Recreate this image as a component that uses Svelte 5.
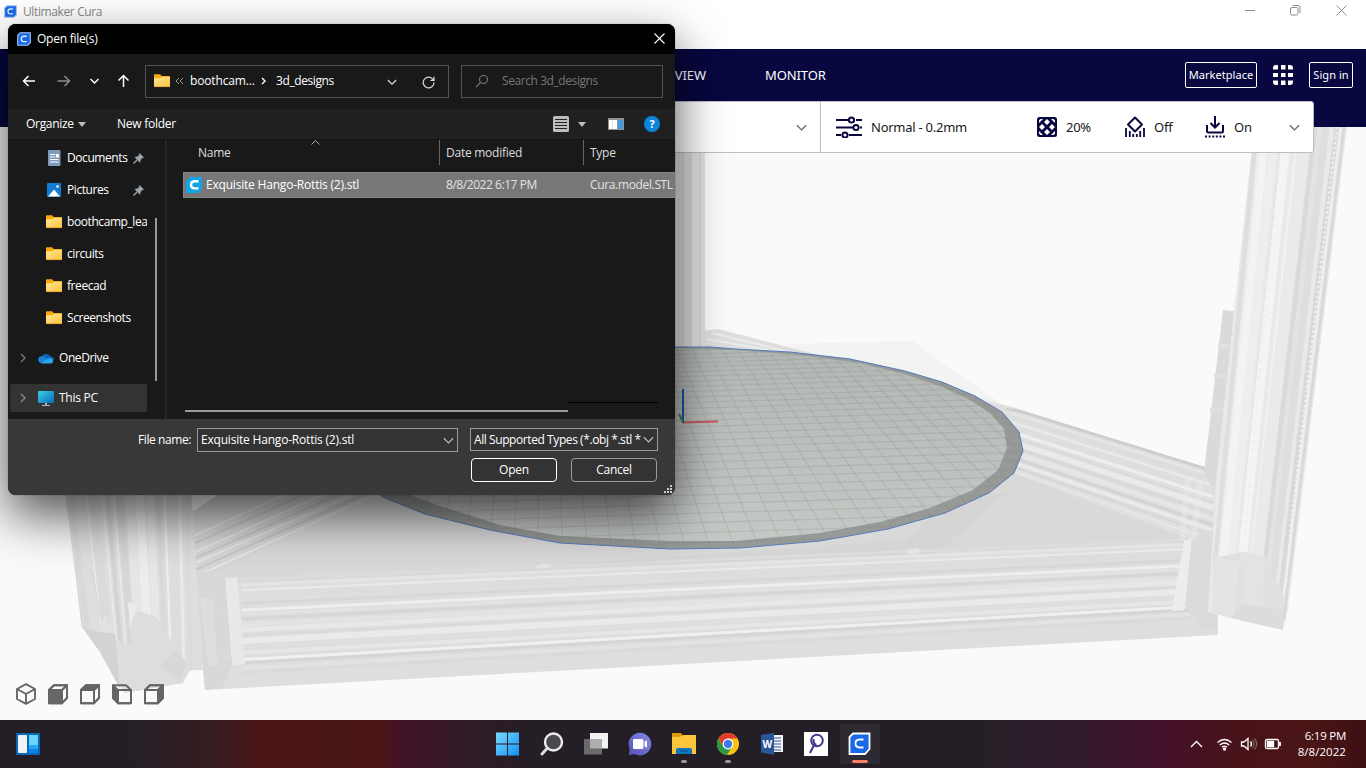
<script>
  const sidebar = [
    { name: 'Documents', icon: 'doc', pin: true },
    { name: 'Pictures', icon: 'pic', pin: true },
    { name: 'boothcamp_lea', icon: 'folder' },
    { name: 'circuits', icon: 'folder' },
    { name: 'freecad', icon: 'folder' },
    { name: 'Screenshots', icon: 'folder' }
  ];

  // Vertices of the round build plate: outer rim and printable area
  const rim = '675,347 711,347 735,349 790,352 850,359 905,371 942,382 975,396 1002,412 1019,432 1023,451 1014,473 989,493 945,513 888,529 820,541 740,548 670,549 560,543 490,530 425,514 383,497 330,450 400,380 560,350';
  const bed = '675,348 735,350 800,355 860,363 905,374 945,388 970,400 990,413 1004,429 1007,448 998,470 973,490 930,508 880,522 820,533 735,541 670,541 560,536 500,525 440,506 383,485 360,440 420,380 560,352';

  // Perspective grid: rows grow towards the viewer, columns fan out
  const rows = Array.from({ length: 34 }, (_, i) => 351 + 118 * (Math.exp(0.0334 * i) - 1));
  const cols = Array.from({ length: 50 }, (_, i) => {
    const k = i - 22;
    return { top: 676 + k * 15, bottom: 760 + k * 24.7 };
  });

  // Stripes across an extruded beam: [offset 0..1, thickness, colour]
  const frontStripes = [
    [0.03, 3, '#dcdcdc'], [0.08, 3, '#e4e4e4'], [0.13, 2, '#eaeaea'], [0.18, 5, '#dcdddc'],
    [0.25, 3, '#d6d7d6'], [0.31, 3, '#eeeeee'], [0.35, 3, '#e2e2e2'], [0.39, 3, '#d5d6d5'],
    [0.44, 4, '#e3e3e3'], [0.49, 5, '#e8e8e8'], [0.54, 2, '#dadada'], [0.59, 6, '#eaeaea'],
    [0.65, 3, '#dfdfdf'], [0.7, 4, '#e6e6e6'], [0.76, 3, '#eff0ef'], [0.79, 3, '#d4d5d4'],
    [0.84, 3, '#e3e3e3'], [0.88, 3, '#dadada']
  ];
  const sideStripes = [
    [0.02, 3, '#d3d3d3'], [0.08, 2, '#e6e6e6'], [0.14, 4, '#dcdedc'], [0.22, 2, '#eaebea'],
    [0.3, 4, '#dcdfdc'], [0.37, 3, '#edefec'], [0.45, 2, '#d8dad8'], [0.52, 5, '#eaebe9'],
    [0.6, 3, '#d7d8d7'], [0.68, 4, '#e6e6e6'], [0.76, 3, '#d2d4d2'], [0.83, 3, '#eaece9'],
    [0.9, 2, '#d6d6d6'], [0.97, 1, '#ebebeb']
  ];
  const pillarStripes = [
    [0.02, 5, '#dedede'], [0.07, 4, '#ececec'], [0.12, 8, '#f2f3f2'], [0.22, 8, '#eeeeee'],
    [0.31, 3, '#e4e5e4'], [0.36, 9, '#f4f4f4'], [0.44, 3, '#e8e9e8'], [0.48, 3, '#f2f2f2'],
    [0.56, 13, '#eaeaea'], [0.66, 5, '#d9dad9'], [0.72, 5, '#e3e4e2'], [0.78, 7, '#dcdfdb'],
    [0.85, 3, '#e9eae8'], [0.9, 5, '#d9dbd9'], [0.94, 2, '#f0f0f0'], [0.98, 3, '#d9d9d9']
  ];
  const leftStripes = [
    [0.03, 6, '#d8d9d8'], [0.11, 5, '#dddedd'], [0.16, 1.5, '#e9e9e9'], [0.21, 9, '#dadbda'],
    [0.29, 2, '#e8e8e8'], [0.33, 4, '#d2d4d2'], [0.38, 1.5, '#ebecea'], [0.43, 7, '#d6d8d6'],
    [0.51, 9, '#e5e6e5'], [0.59, 9, '#eceeec'], [0.67, 8, '#e6e8e6'], [0.74, 4, '#d8d9d8'],
    [0.79, 2, '#eff0ef'], [0.85, 6, '#dcdddc'], [0.91, 3, '#e9ebe8'], [0.97, 4, '#dadbda']
  ];
  const mix = (a, b, t) => a + (b - a) * t;
</script>

{#snippet folder()}
  <svg class="i16" viewBox="0 0 16 16"><path d="M0 2.2Q0 1.3.9 1.3H6l1.700 1.800H15.200q.8 0 .8.8V8H0z" fill="#f5ab0c" /><path d="M0 5.200h6.400L8 3.700h8v9.400q0 .9-.9.9H.9Q0 14 0 13.100z" fill="url(#fold)" /><path d="M.2 13.600h15.600" stroke="#e5a11c" stroke-width=".8" /></svg>
{/snippet}

{#snippet cura(size)}
  <svg width={size} height={size} viewBox="0 0 14 14"><path d="M3.300.700H13.300V10.700L10.700 13.300H.700V3.300z" fill="#1769e8" stroke="#a9c5f2" stroke-width="1.100" /><path d="M9.800 4.300H6.700Q4.300 4.400 4.300 7T6.700 9.600H9.800" fill="none" stroke="#dce9ff" stroke-width="1.400" /></svg>
{/snippet}

{#snippet down(w, color)}
  <svg width={w} height={w} viewBox="0 0 10 10"><path d="M.8 3l4.200 4.200L9.200 3" fill="none" stroke={color} stroke-width="1.100" /></svg>
{/snippet}

<div class="screen">
  <svg class="defs" width="0" height="0">
    <defs>
      <linearGradient id="fold" x1="0" y1="0" x2="1" y2="1"><stop offset="0" stop-color="#ffe59a" /><stop offset="1" stop-color="#fbc53d" /></linearGradient>
      <linearGradient id="bedfill" x1="0" y1="0" x2="0" y2="1"><stop offset="0" stop-color="#b3b7b4" /><stop offset="1" stop-color="#c5c9c5" /></linearGradient>
      <linearGradient id="win" x1="0" y1="0" x2="1" y2="1"><stop offset="0" stop-color="#7ad9ff" /><stop offset="1" stop-color="#1191f5" /></linearGradient>
      <linearGradient id="pc" x1="0" y1="0" x2="1" y2="1"><stop offset="0" stop-color="#35d3e2" /><stop offset="1" stop-color="#0f68bd" /></linearGradient>
      <linearGradient id="chat" x1="0" y1="1" x2="1" y2="0"><stop offset="0" stop-color="#5550b8" /><stop offset="1" stop-color="#8a8ae6" /></linearGradient>
      <clipPath id="bedclip"><polygon points={rim} /></clipPath>
    </defs>
  </svg>

  <header class="titlebar">
    <div class="apptitle">{@render cura(13)}<span>Ultimaker Cura</span></div>
    <svg class="winctl" width="110" height="20" viewBox="0 0 110 20" fill="none" stroke="#8b8b8b"><path d="M3 10.500H13M94.500 5.500l10 10M104.500 5.500l-10 10" /><rect x="48.500" y="7.500" width="7.500" height="7.500" rx="1.500" /><path d="M50.500 5.500h5.500q2 0 2 2v5.500" /></svg>
  </header>

  <nav class="stages">
    <span class="stage preview">PREVIEW</span>
    <span class="stage monitor">MONITOR</span>
    <button class="outline market">Marketplace</button>
    <svg class="apps" width="20" height="20" viewBox="0 0 20 20" fill="#fff">
      <path d="M3 0H5V4.500H0V3Q0 0 3 0zM8 0h4.500v4.500H8zM15 0h2q3 0 3 3v1.500h-5zM0 8h5v4H0zM8 8h4.500v4H8zM15 8h5v4h-5zM0 15.500h5V20H3q-3 0-3-3zM8 15.500h4.500V20H8zM15 15.500h5V17q0 3-3 3h-2z" />
    </svg>
    <button class="outline signin">Sign in</button>
  </nav>

  <main class="viewport">
    <svg width="1366" height="593" viewBox="0 127 1366 593">
      <!-- rear pillar and rails -->
      <rect x="660" y="127" width="45" height="222" fill="#e2e2e2" />
      <path d="M683 127V348M690 127V348M700 127V348" stroke="#d6d7d6" stroke-width="2" />
      <path d="M694 127V348M677 127V348" stroke="#ebebeb" stroke-width="2" />
      <polygon points="784,344 912,341 1010,410 880,380" fill="#f3f3f3" />
      <polygon points="703,331 718,329 800,350 1023,410 1020,420 900,390 705,350" fill="#dededf" />
      <path d="M706 339L860 366M712 333L1000 404" stroke="#ebebeb" stroke-width="2" />
      <!-- floor -->
      <polygon points="190,570 300,490 1000,430 1215,480 1218,560 240,590" fill="#d9d9d9" />
      <polygon points="540,566 905,540 945,505 1008,492 980,515 930,560" fill="#d5d5d5" />
      <!-- diagonal rail on the right -->
      <polygon points="1000,404 1022,411 1215,471 1213,541 1195,541 1010,472" fill="#dfe0df" />
      {#each sideStripes as [t, w, c]}
        <line x1="1012" y1={mix(408, 473, t)} x2="1214" y2={mix(470, 543, t)} stroke={c} stroke-width={w} />
      {/each}
      <path d="M1006 409L1024 412L1214 471" fill="none" stroke="#cdcdcd" stroke-width="2" />
      <!-- diagonal rail on the left -->
      <polygon points="180,520 240,480 400,480 190,586" fill="#d6d7d6" />
      <path d="M184 557L345 485M184 568L375 485M188 580L400 483M185 540L310 483" stroke="#e5e5e5" stroke-width="2" />
      <path d="M184 563L360 485M186 574L390 483M184 548L330 483" stroke="#c8cac9" stroke-width="2" />
      <!-- front beam -->
      <polygon points="200,585 1215,541 1218,635 205,690" fill="#dedede" />
      {#each frontStripes as [t, w, c]}
        <line x1="242" y1={mix(576, 686, t)} x2="1190" y2={mix(537, 629, t)} stroke={c} stroke-width={w} />
      {/each}
      <polygon points="225,578 237,577 245,664 232,666" fill="#e8e8e8" />
      <polygon points="196,574 215,570 225,578 232,665 222,688 205,690 196,600" fill="#d8d8d8" />
      <path d="M201 599l11 1 5 66h-8zM219 608l8 1M222 656l8 0" fill="#dddddd" stroke="#e0e0e0" />
      <polygon points="1184,541 1196,536 1184,610 1172,611" fill="#ecedec" />
      <polygon points="1192,536 1214,530 1218,628 1205,630 1185,606" fill="#dadbda" />
      <path d="M1188 478L1182 540M1200 480L1194 540" stroke="#eceeeb" stroke-width="6" opacity=".4" />
      <!-- left pillar -->
      <polygon points="62,470 190,470 203,670 190,670 183,683 124,693 100,652 82,627" fill="#dededd" />
      {#each leftStripes as [t, w, c]}
        <line x1={mix(62, 190, t)} y1="460" x2={mix(84, 194, t)} y2={mix(626, 672, t)} stroke={c} stroke-width={w} />
      {/each}
      <polygon points="82,627 96,631 115,634 120,689 100,652" fill="#d2d3d2" />
      <polygon points="128,620 140,611 157,618 177,650 183,683 124,693 136,665" fill="#dcdddc" />
      <polygon points="128,602 138,604 134,615 130,628" fill="#eaebea" />
      <polygon points="96,631 105,614 115,634" fill="#e1e2e0" /><path d="M177 650l-18 17 22 13 6-16" fill="#d8d8d8" />
      <path d="M82 627L75 562 92 571 100 617" fill="none" stroke="#d3d5d3" />
      <!-- right pillar -->
      <polygon points="1223,310 1234,311 1218,500 1204,472" fill="#d9dad9" />
      <path d="M1218 346h12M1214 376h12M1210 410h14" stroke="#e0e1df" stroke-width="5" />
      <polygon points="1254,127 1347,127 1288,610 1283,630 1230,618 1208,612 1216,480" fill="#e8e9e8" />
      {#each pillarStripes as [t, w, c]}
        <line x1={mix(1255, 1346, t)} y1="127" x2={mix(1214, 1285, t)} y2={mix(560, 622, t)} stroke={c} stroke-width={w} />
      {/each}
      <path d="M1337 127L1291 525 1286 585" fill="none" stroke="#f4f4f4" stroke-width="2" stroke-dasharray="2 3" />
      <path d="M1333 145L1285 550" fill="none" stroke="#cbcdcb" stroke-width="1" stroke-dasharray="1 4" />
      <path d="M1282 127L1245 535" fill="none" stroke="#d3d5d3" stroke-width="1" stroke-dasharray="1 8" />
      <polygon points="1214,558 1244,552 1266,558 1284,597 1283,624 1231,618 1212,612" fill="#dfe0df" />
      <polygon points="1241,552 1265,558 1262,606 1243,605" fill="#e2e3e2" />
      <polygon points="1215,556 1240,562 1233,618 1212,610" fill="#e3e4e3" />
      <polygon points="1242,604 1283,610 1283,630 1231,618" fill="#dcdcdc" />
      <!-- build plate -->
      <polygon points={rim} fill="#979a97" />
      <polygon points={bed} fill="url(#bedfill)" />
      <g clip-path="url(#bedclip)" stroke="#858a86" stroke-opacity=".22" stroke-width="1.300">
        {#each rows as y}<line x1="330" y1={y + 10} x2="1030" y2={y - 11} />{/each}
        {#each cols as c}<line x1={c.top} y1="347" x2={c.bottom} y2="549" />{/each}
      </g>
      <polygon points={rim} fill="none" stroke="#557dbd" />
      <path d="M683 422.500L718 421.500" stroke="#c9595e" stroke-width="2" /><path d="M683 389V423" stroke="#1b50b5" stroke-width="2" /><path d="M679 414l4 8" stroke="#3d7b4d" stroke-width="2" />
      <path d="M905 550l12-2 5 4-12 3zM533 567l12-4 8 3-9 3z" fill="#e5e5e5" />
    </svg>

    <div class="views">
      {#each [0, 1, 2, 3, 4] as v}
        <svg width="22" height="22" viewBox="0 0 22 22" fill="none" stroke="#666" stroke-width="1.900" stroke-linejoin="round">
          {#if v === 0}
            <path d="M11 1.200L20 6v10l-9 4.800L2 16V6zM2 6l9 5 9-5M11 11v9.800" />
          {:else if v === 3}
            <path d="M2 2.200H15L20 7V20.200H7L2 15z" /><path d="M7 7H20V20.200H7z" /><path d="M2 2.200L7 7V20.200L2 15z" fill="#666" />
          {:else}
            <path d="M7 2.200H20V15l-5 5.200H2V7z" />
            <path d="M2 7H15V20.200H2z" fill={v === 1 ? '#666' : 'none'} />
            <path d="M7 2.200H20L15 7H2z" fill={v === 2 ? '#666' : 'none'} />
            <path d="M20 2.200V15l-5 5.200V7z" fill={v === 4 ? '#666' : 'none'} />
          {/if}
        </svg>
      {/each}
    </div>
  </main>

  <section class="settings">
    <div class="material">{@render down(11, '#666')}</div>
    <div class="profile">
      <svg width="27" height="22" viewBox="0 0 27 22" fill="none" stroke="#08073f" stroke-width="2"><path d="M0 4H12M20 4H26M0 11.500H17M24 11.500H26M0 19H5M13 19H26" /><circle cx="15.500" cy="4" r="2.600" /><circle cx="20" cy="11.500" r="2.600" /><circle cx="9" cy="19" r="2.600" /></svg>
      <span class="pname">Normal - 0.2mm</span>
      <svg class="infill" width="20" height="20" viewBox="0 0 20 20"><rect width="20" height="20" rx="2.500" fill="#08073f" /><g fill="#fff"><path d="M10 2l3 3-3 3-3-3zM10 12l3 3-3 3-3-3zM5 7l3 3-3 3-3-3zM15 7l3 3-3 3-3-3z" /><path d="M3.500 2h2.500L2 6V3.500zM16.500 2H14l4 4V3.500zM3.500 18h2.500L2 14v2.500zM16.500 18H14l4-4v2.500z" /></g></svg>
      <span class="v1">20%</span>
      <svg class="support" width="20" height="22" viewBox="0 0 20 22" fill="none" stroke="#08073f" stroke-width="2"><path d="M10 1.500l7 7-7 7-7-7z" stroke-linejoin="round" /><path d="M1 12v9M4.800 15v6M8.200 18v3M11.800 18v3M15.200 15v6M19 12v9" stroke-width="1.800" /></svg>
      <span class="v2">Off</span>
      <svg class="adhesion" width="20" height="22" viewBox="0 0 20 22" fill="none" stroke="#08073f" stroke-width="2"><path d="M10 0v11M5.500 7L10 11.500 14.500 7M2 9v6q0 1.500 1.500 1.500h13Q18 16.500 18 15V9" /><path d="M0 20.500h20" stroke-dasharray="2 1.600" /></svg>
      <span class="v3">On</span>
      <span class="end">{@render down(11, '#666')}</span>
    </div>
  </section>

  <section class="dialog">
    <div class="dtitle">{@render cura(14)}<span>Open file(s)</span><svg class="close" width="11" height="11" viewBox="0 0 11 11"><path d="M.5.5l10 10M10.500.5l-10 10" stroke="#fff" stroke-width="1.100" /></svg></div>

    <div class="dnav">
      <svg class="arrows" width="115" height="16" viewBox="0 0 115 16" fill="none" stroke="#fff" stroke-width="1.500"><path d="M13 8H1.500M6.500 3l-5 5 5 5" /><path d="M35.500 8H47M42.500 3l5 5-5 5" stroke="#8d8d8d" /><path d="M68.500 6l4 4 4-4" /><path d="M101.500 14V2.500M96.500 7.500l5-5 5 5" /></svg>
      <div class="address">
        {@render folder()}
        <svg class="back" width="9" height="8" viewBox="0 0 9 8" fill="none" stroke="#999"><path d="M4 1L1 4l3 3M8 1L5 4l3 3" /></svg>
        <span class="crumb1">boothcam...</span>
        <svg class="sep" width="6" height="8" viewBox="0 0 6 8" fill="none" stroke="#fff" stroke-width="1.400"><path d="M1 1l3 3-3 3" /></svg>
        <span class="crumb2">3d_designs</span>
        <span class="drop">{@render down(10, '#ddd')}</span>
        <svg class="refresh" width="13" height="13" viewBox="0 0 13 13" fill="none" stroke="#ddd" stroke-width="1.200"><path d="M12 6.500A5.400 5.400 0 1 1 10.500 2.800L12 4.300M12 .8v3.500H8.500" /></svg>
      </div>
      <div class="search">
        <svg width="14" height="14" viewBox="0 0 14 14" fill="none" stroke="#777" stroke-width="1.100"><circle cx="8.500" cy="5.500" r="4" /><path d="M5.500 8.500L1 13" /></svg>
        <span>Search 3d_designs</span>
      </div>
    </div>

    <div class="tools">
      <span class="organize">Organize</span><i class="tri"></i><span class="newf">New folder</span>
      <svg class="list" width="16" height="16" viewBox="0 0 16 16"><rect width="16" height="16" rx="1.500" fill="#bdbdbd" /><path d="M2 3.500h12M2 6.500h12M2 9.500h12M2 12.500h12" stroke="#222" /></svg>
      <i class="tri t2"></i>
      <svg class="pane" width="16" height="12" viewBox="0 0 16 12"><rect width="16" height="12" fill="#8e9296" /><path d="M1 2h8v9H1z" fill="#fff" /><path d="M10 2h5v9h-5z" fill="#3f9ae0" /><path d="M4.500 2v9" stroke="#ccc" stroke-width=".6" /></svg>
      <span class="help">?</span>
    </div>

    <div class="dbody">
      <aside>
        {#each sidebar as item}
          <div class="side">
            {#if item.icon === 'folder'}{@render folder()}
            {:else if item.icon === 'doc'}<svg class="i16" viewBox="0 0 16 16"><rect x="2" width="12.500" height="16" rx="1" fill="#7e9cb9" /><path d="M4 4.500h5M4 7h5M4 9.500h8.500M4 12h8.500" stroke="#fff" stroke-width="1.200" /><path d="M9.800 4h3v3.500h-3z" fill="#fff" /></svg>
            {:else}<svg class="i16" viewBox="0 0 16 16"><rect x="1" y="1" width="14" height="14" rx="1" fill="#147dd2" /><path d="M2 14.500L8 7.500l6 7z" fill="#fff" /><circle cx="11.500" cy="4.500" r="1.200" fill="#fff" /></svg>{/if}
            <span>{item.name}</span>
            {#if item.pin}<svg class="pin" width="11" height="11" viewBox="0 0 11 11"><path d="M6.500 0L11 4.500l-2 .7-1.500 2-.2 2.800L1.500 4l2.800-.4L6 2z" fill="#9aa4ab" /><path d="M4.500 6.500L.5 10.500" stroke="#9aa4ab" stroke-width="1.300" /></svg>{/if}
          </div>
        {/each}
        <div class="side root drive">
          <svg class="exp" width="6" height="10" viewBox="0 0 6 10"><path d="M1 1l4 4-4 4" fill="none" stroke="#777" stroke-width="1.400" /></svg>
          <svg class="i16" viewBox="0 0 16 16"><path d="M3.500 8A4.800 4.800 0 0 1 12.500 6.500 3.500 3.500 0 0 1 16 10L8 12z" fill="#0d63b8" /><path d="M3.500 13A3.400 3.400 0 0 1 3.800 6.200Q6 6 8 8l5 4z" fill="#1b82dc" /><path d="M3 13.200L9 8.900q3-1.500 4.700-.2A2.700 2.700 0 0 1 13.500 13.500H4z" fill="#2aa5ee" /></svg>
          <span>OneDrive</span>
        </div>
        <div class="side root thispc">
          <svg class="exp" width="6" height="10" viewBox="0 0 6 10"><path d="M1 1l4 4-4 4" fill="none" stroke="#888" stroke-width="1.400" /></svg>
          <svg class="i16" viewBox="0 0 16 16"><rect y="1" width="16" height="12" rx=".8" fill="url(#pc)" /><path d="M7 13h2v2h3v1H4v-1h3z" fill="#a9b5bf" /></svg>
          <span>This PC</span>
        </div>
      </aside>
      <div class="sbar"><i></i></div>
      <div class="files">
        <div class="cols"><span class="cname">Name</span><span class="cdate">Date modified</span><span class="ctype">Type</span>
          <svg class="sort" width="9" height="5" viewBox="0 0 9 5"><path d="M.5 4.500l4-4 4 4" fill="none" stroke="#aaa" /></svg>
        </div>
        <div class="file">
          <svg width="16" height="16" viewBox="0 0 16 16"><path d="M4 0H16V12L12 16H0V4z" fill="#12a4e4" /><path d="M12.500 4.200H8.500Q5 4.400 5 7.800t3.500 3.600h4" fill="none" stroke="#fff" stroke-width="2.400" /></svg>
          <span class="fname">Exquisite Hango-Rottis (2).stl</span><span class="fdate">8/8/2022 6:17 PM</span><span class="ftype">Cura.model.STL</span>
        </div>
        <div class="hbar"><i></i><b></b></div>
      </div>
    </div>

    <footer>
      <div class="fields">
        <label for="fn">File name:</label>
        <div class="combo fn" id="fn"><span>Exquisite Hango-Rottis (2).stl</span>{@render down(11, '#bbb')}</div>
        <div class="combo ft"><span>All Supported Types (*.obj *.stl *</span>{@render down(11, '#bbb')}</div>
      </div>
      <div class="actions"><button class="open">Open</button><button>Cancel</button></div>
      <svg class="grip" width="9" height="9" viewBox="0 0 9 9" fill="#ccc"><path d="M6 0h2v2H6zM3 3h2v2H3zM6 3h2v2H6zM0 6h2v2H0zM3 6h2v2H3zM6 6h2v2H6z" /></svg>
    </footer>
  </section>

  <div class="taskbar">
    <svg class="widgets" width="24" height="22" viewBox="0 0 24 22"><rect width="24" height="22" rx="1" fill="#0a67b8" /><rect x="2" y="2" width="9" height="18" rx="1" fill="#f3f3f3" /><rect x="13" y="2" width="9" height="10" fill="#68d5ff" /><rect x="13" y="12" width="9" height="4" fill="#24a5f5" /><rect x="13" y="16" width="9" height="4" fill="#0784ee" /></svg>
    <div class="pinned">
      <div class="app"><svg viewBox="0 0 24 24"><path d="M0 .500h11v11H0zM12 .5h11v11H12zM0 12.500h11v11H0zM12 12.500h11v11H12z" fill="url(#win)" /></svg></div>
      <div class="app"><svg viewBox="0 0 24 24"><circle cx="13.500" cy="10" r="8.500" fill="#4b484f" stroke="#eee" stroke-width="2.400" /><path d="M7.500 16L2 22" stroke="#d9dde0" stroke-width="3" stroke-linecap="round" /></svg></div>
      <div class="app"><svg viewBox="0 0 24 24"><path d="M6 1h18v15.500H6z" fill="#f3f3f3" /><path d="M0 7h18v15.500H0z" fill="#6b6b6b" /><path d="M6 7h12v9.500H6z" fill="#adadad" /></svg></div>
      <div class="app"><svg viewBox="0 0 24 24"><path d="M12 .8a11.300 11.300 0 1 1-5.500 21.200L.8 23.200 1.700 17A11.300 11.300 0 0 1 12 .8z" fill="url(#chat)" /><path d="M6 7h8q1.500 0 1.500 1.500v7Q15.500 17 14 17H6q-1 0-1-1V8q0-1 1-1zM16.500 10L19 8v8l-2.500-2z" fill="#fff" /></svg></div>
      <div class="app"><svg viewBox="0 0 24 24"><path d="M0 1h9l2 3v5H0z" fill="#dd9a0a" /><path d="M0 5h8l3-2h13v19H0z" fill="#fcc63c" /><path d="M4 22v-4q0-2 2-2h12q2 0 2 2v4z" fill="#0f74bd" /><path d="M8 19h8" stroke="#0b5c9e" stroke-width="1.500" /></svg><i></i></div>
      <div class="app"><svg viewBox="0 0 24 24"><circle cx="12" cy="12" r="11" fill="#fbc116" /><path d="M2.500 6.500A11 11 0 0 1 21.500 6.500H12L7.200 14.700z" fill="#e33b2e" /><path d="M2.500 6.500A11 11 0 0 0 11 23l5-8.300-8.700.2z" fill="#2a9a48" /><circle cx="12" cy="12" r="5.400" fill="#fff" /><circle cx="12" cy="12" r="4.200" fill="#3b7de8" /></svg><i></i></div>
      <div class="app"><svg viewBox="0 0 24 24"><path d="M11 3h12v17H11z" fill="#f5f7fb" /><path d="M14 6h7M14 9h7M14 12h7M14 15h7M14 18h7" stroke="#2b579a" stroke-width="1.200" /><path d="M1 3l13-2.200v22L1 20.500z" fill="#2b579a" /><text x="2.600" y="15.500" font-size="10" font-weight="700" fill="#fff">W</text></svg></div>
      <div class="app"><svg viewBox="0 0 24 24"><path d="M0 0h24v24H0z" fill="#fff" /><circle cx="13" cy="8.500" r="5.800" fill="none" stroke="#43368c" stroke-width="2" /><path d="M9.500 7q0 5.500 3 6M10.500 12L6 21" fill="none" stroke="#43368c" stroke-width="2" /></svg></div>
      <div class="app active"><svg viewBox="0 0 24 24"><path d="M5 1.500H21.500V17L17 22H1.500V5z" fill="#1769e8" stroke="#fff" stroke-width="1.800" /><path d="M15.500 7.500H11.500Q7.500 7.700 7.500 11.500t4 4h4" fill="none" stroke="#fff" stroke-width="1.800" /></svg><i></i></div>
    </div>
    <svg class="tray" width="94" height="16" viewBox="0 0 94 16" fill="none" stroke="#fff" stroke-width="1.300">
      <path d="M1 11l5.500-5.500L12 11" />
      <path d="M27.500 6.500q7-6 14 0M29.800 9q4.700-4 9.400 0M32 11.200q2.500-2 5 0" /><circle cx="34.500" cy="13" r="1" fill="#fff" />
      <path d="M51.500 6H54l4-3.500v11L54 10H51.500zM60.500 5.500q2 2.500 0 5" /><path d="M62.500 4q3 4 0 8M64.500 2.500q4.500 5.500 0 11" stroke="#7d5a5e" />
      <rect x="75.500" y="3.500" width="13" height="9" rx="1.500" /><path d="M77.500 5.500h6v5h-6z" fill="#fff" /><path d="M90 6v4" stroke-width="1.800" />
    </svg>
    <div class="clock"><span>6:19 PM</span><span class="date">8/8/2022</span></div>
  </div>
</div>

<style>
  :global(body) { margin: 0; overflow: hidden; }
  .screen { position: relative; width: 1366px; height: 768px; overflow: hidden; display: flex; flex-direction: column; background: #fafafa; font: 12px/16px "Open Sans", "Noto Sans", sans-serif; letter-spacing: -0.25px; box-sizing: border-box; }
  .screen * { box-sizing: border-box; }
  svg { display: block; flex: none; }
  span, label { white-space: nowrap; }
  .defs { position: absolute; }
  .i16 { width: 16px; height: 16px; }
  button { font: inherit; letter-spacing: inherit; padding: 0; }

  .titlebar { height: 49px; background: #fff; display: flex; justify-content: space-between; }
  .apptitle { display: flex; gap: 6px; padding: 5px 0 0 4px; color: #888; letter-spacing: -0.38px; height: 20px; }
  .apptitle span { margin-top: -1px; }
  .winctl { margin-right: 14px; }

  .stages { height: 78px; background: #08073f; display: flex; align-items: flex-start; padding: 13px 13px 0 0; color: #fff; font: 13px/26px "Noto Sans", "Open Sans", sans-serif; letter-spacing: -0.1px; }
  .preview { width: 706px; text-align: right; }
  .monitor { margin-left: 59px; flex: 1; }
  .outline { height: 26px; border: 1px solid #fff; border-radius: 2px; background: none; color: #fff; font-size: 11px; letter-spacing: 0.050px; line-height: 24px; }
  .market { width: 72px; }
  .apps { margin: 3px 16px 0; }
  .signin { width: 44px; }

  .viewport { height: 593px; position: relative; }
  .views { position: absolute; left: 15px; bottom: 15px; display: flex; gap: 10px; }

  .settings { position: absolute; left: 300px; top: 101px; width: 1014px; height: 52px; display: flex; background: #fff; border: 1px solid #bdbdc4; border-radius: 3px; font: 13px/18px "Noto Sans", "Open Sans", sans-serif; letter-spacing: -0.25px; color: #191919; }
  .material { width: 520px; border-right: 1px solid #bdbdc4; display: flex; align-items: center; justify-content: flex-end; padding-right: 13px; }
  .profile { flex: 1; display: flex; align-items: center; padding-left: 15px; }
  .pname { margin-left: 8px; width: 166px; }
  .v1 { margin-left: 9px; width: 59px; }
  .v2 { margin-left: 9px; width: 51px; }
  .v3 { margin-left: 9px; }
  .end { margin-left: auto; margin-right: 13px; }

  .dialog { position: absolute; left: 8px; top: 24px; width: 667px; height: 471px; border-radius: 8px; background: #191919; color: #fff; display: flex; flex-direction: column; overflow: hidden; box-shadow: 0 0 1px rgba(0, 0, 0, .6), 0 20px 50px rgba(0, 0, 0, .68); }
  .dtitle { height: 30px; background: #000; display: flex; align-items: center; padding: 0 10px 0 9px; gap: 6px; letter-spacing: -0.25px; }
  .close { margin-left: auto; margin-bottom: 2px; }
  .dnav { height: 55px; display: flex; align-items: center; padding: 0 0 1px 14px; }
  .arrows { margin-right: 8px; }
  .address { width: 304px; height: 33px; border: 1px solid #535353; display: flex; align-items: center; padding-left: 8px; }
  .back { margin-left: 5px; }
  .crumb1 { margin-left: 6px; width: 66px; letter-spacing: -0.15px; padding-bottom: 1px; }
  .sep { margin-left: 5px; }
  .crumb2 { margin-left: 9px; letter-spacing: -0.4px; padding-bottom: 1px; }
  .drop { margin-left: auto; margin-right: 25px; padding-top: 2px; }
  .refresh { margin-right: 13px; margin-top: 2px; }
  .search { width: 202px; height: 33px; border: 1px solid #535353; margin-left: 12px; display: flex; align-items: center; padding-left: 13px; gap: 13px; color: #777; letter-spacing: -0.42px; }
  .search span { padding-bottom: 1px; }
  .tools { height: 30px; background: #202020; display: flex; align-items: center; padding-left: 18px; }
  .organize { width: 52px; letter-spacing: -0.3px; }
  .tri { border: 4px solid transparent; border-top: 5px solid #bbb; border-bottom: 0; }
  .newf { margin-left: 31px; }
  .list { margin-left: auto; }
  .t2 { margin-left: 9px; }
  .pane { margin-left: 22px; }
  .help { margin: 0 15px 0 20px; width: 16px; height: 16px; border-radius: 50%; background: #0d84dc; font-weight: 700; font-size: 11px; text-align: center; letter-spacing: 0; }

  .dbody { height: 280px; display: flex; border-top: 1px solid #161616; }
  aside { width: 139px; overflow: hidden; padding-left: 2px; padding-top: 2px; }
  .side { height: 32px; display: flex; align-items: center; gap: 5px; padding-left: 36px; position: relative; letter-spacing: -0.42px; }
  .pin { position: absolute; right: 3px; top: 11px; }
  .root { padding-left: 10px; gap: 5px; }
  .root .exp { margin-right: 7px; }
  .drive { margin-top: 8px; }
  .thispc { margin-top: 10px; height: 28px; background: #333; border-radius: 2px; letter-spacing: -0.25px; }
  .sbar { width: 20px; border-right: 2px solid #282828; padding: 78px 0 0 8px; }
  .sbar i { display: block; width: 2px; height: 163px; background: #999; }
  .files { flex: 1; min-width: 0; display: flex; flex-direction: column; padding-left: 16px; }
  .cols { height: 25px; display: flex; line-height: 26px; color: #ddd; position: relative; }
  .cname { width: 257px; padding-left: 15px; border-right: 1px solid #666; }
  .cdate { width: 144px; padding-left: 6px; border-right: 1px solid #666; }
  .ctype { padding-left: 6px; }
  .sort { position: absolute; left: 128px; top: 0; }
  .file { height: 26px; margin-top: 7px; background: #777; border: 1px solid #858585; border-right: 0; display: flex; align-items: center; padding-left: 2px; color: #e2e2e2; }
  .fname { color: #fff; margin-left: 4px; width: 240px; letter-spacing: -0.2px; }
  .fdate { width: 144px; letter-spacing: -0.45px; }
  .ftype { letter-spacing: -0.35px; }
  .hbar { margin-top: auto; height: 17px; display: flex; padding-left: 2px; }
  .hbar i { width: 383px; height: 2px; background: #999; margin-top: 8px; }
  .hbar b { width: 90px; height: 1px; background: #000; }

  footer { flex: 1; background: #383838; padding: 9px 17px 0 0; position: relative; }
  .fields { display: flex; justify-content: flex-end; align-items: flex-start; }
  label { line-height: 24px; margin-right: 6px; letter-spacing: -0.42px; }
  .combo { height: 24px; border: 1px solid #999; background: #333; display: flex; align-items: center; justify-content: space-between; padding: 0 3px; }
  .fn { width: 261px; margin-right: 12px; letter-spacing: -0.2px; }
  .ft { width: 188px; height: 23px; letter-spacing: -0.42px; }
  .ft span { width: 167px; overflow: hidden; }
  .actions { display: flex; justify-content: flex-end; gap: 14px; margin-top: 6px; padding-right: 1px; }
  .actions button { width: 86px; height: 24px; background: #333; color: #fff; border: 1px solid #9b9b9b; border-radius: 4px; line-height: 20px; }
  .actions .open { border-color: #fff; }
  .grip { position: absolute; right: 2px; bottom: 1px; }

  .taskbar { height: 48px; display: flex; align-items: center; position: relative; color: #fff; background: linear-gradient(90deg, #241f27 0, #241f27 130px, #341d20 210px, #4d1414 265px, #481713 340px, #4d1415 375px, #421226 400px, #2f1a25 470px, #241f27 540px, #241f27 980px, #301a2a 1080px, #44112c 1160px, #481318 1240px, #4a1516 1310px, #3d1013 1366px); }
  .widgets { margin-left: 16px; }
  .pinned { display: flex; gap: 4px; margin-left: 448px; }
  .app { width: 40px; height: 40px; display: flex; justify-content: center; align-items: center; border-radius: 4px; position: relative; }
  .app svg { width: 24px; height: 24px; }
  .app i { position: absolute; bottom: 1px; left: 17px; width: 6px; height: 3px; border-radius: 2px; background: #999; }
  .active { background: #2e2a32; }
  .active i { left: 12px; width: 16px; background: #ff7f64; }
  .tray { margin-left: auto; margin-right: 0; }
  .clock { width: 62px; margin-right: 20px; display: flex; flex-direction: column; align-items: flex-end; font-size: 11.500px; }
  .date { letter-spacing: 0.050px; }
</style>
